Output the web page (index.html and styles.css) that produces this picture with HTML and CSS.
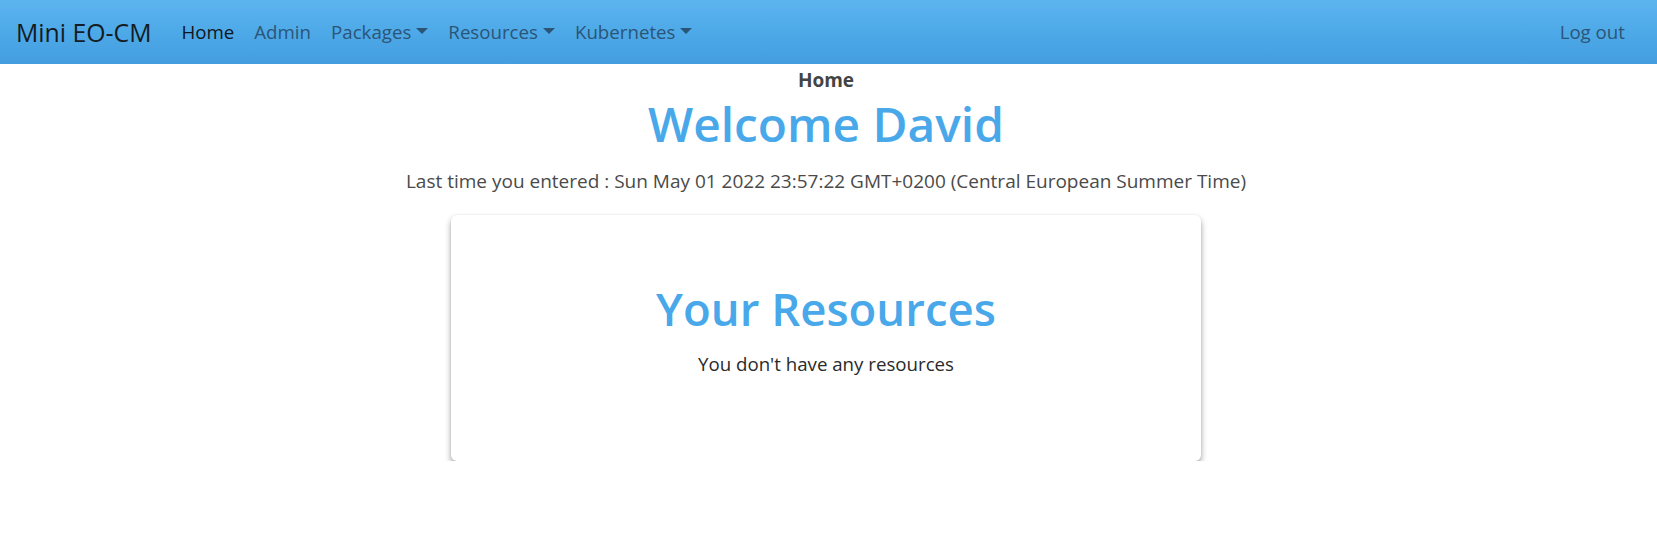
FILE: index.html
```html
<!DOCTYPE html>
<html lang="en">
<head>
<meta charset="utf-8">
<title>Mini EO-CM</title>
<link rel="stylesheet" href="styles.css">
</head>
<body>
<nav class="navbar">
  <a class="brand" href="#">Mini EO-CM</a>
  <ul class="nav">
    <li><a class="nav-link active" href="#">Home</a></li>
    <li><a class="nav-link" href="#">Admin</a></li>
    <li><a class="nav-link dropdown" href="#">Packages</a></li>
    <li><a class="nav-link dropdown" href="#">Resources</a></li>
    <li><a class="nav-link dropdown" href="#">Kubernetes</a></li>
  </ul>
  <ul class="nav nav-right">
    <li><a class="nav-link" href="#">Log out</a></li>
  </ul>
</nav>
<main class="main">
  <div class="page-title">Home</div>
  <h1 class="welcome">Welcome David</h1>
  <p class="last-time">Last time you entered : Sun May 01 2022 23:57:22 GMT+0200 (Central European Summer Time)</p>
  <section class="card">
    <h2 class="card-title">Your Resources</h2>
    <p class="card-text">You don't have any resources</p>
  </section>
</main>
</body>
</html>
```

FILE: styles.css
```css
* { box-sizing: border-box; }

body {
  margin: 0;
  font-family: "Open Sans", "Noto Sans", sans-serif;
  background: #ffffff;
  color: #444444;
}

.navbar {
  display: flex;
  align-items: center;
  height: 64px;
  padding: 0 22px 0 16px;
  background: linear-gradient(to bottom, #5cb4ef 0%, #4ea9e8 50%, #439ddf 100%);
}

.brand {
  font-size: 24.8px;
  color: #141b22;
  text-decoration: none;
  margin-right: 20px;
  line-height: 30px;
}

.nav {
  display: flex;
  list-style: none;
  margin: 0;
  padding: 0;
}

.nav-right { margin-left: auto; }

.nav-link {
  display: block;
  padding: 0 10px;
  font-size: 18.7px;
  line-height: 30px;
  color: #2b5576;
  text-decoration: none;
}

.nav-link.active { color: #10161c; }

.dropdown::after {
  content: "";
  display: inline-block;
  margin-left: 5px;
  vertical-align: 5px;
  border-top: 6px solid currentColor;
  border-left: 6px solid transparent;
  border-right: 6px solid transparent;
}

.main {
  display: flex;
  flex-direction: column;
  align-items: center;
  padding-right: 5px;
  text-align: center;
}

.page-title {
  margin-top: 4px;
  font-size: 19px;
  font-weight: 700;
  line-height: 24px;
  color: #444444;
}

.welcome {
  margin: 2px 0 0;
  font-size: 47.8px;
  font-weight: 600;
  line-height: 60px;
  color: #48a8ea;
}

.last-time {
  margin: 12px 0 0;
  font-size: 19px;
  line-height: 30px;
  color: #4a4a4a;
}

.card {
  width: 750px;
  margin-top: 19px;
  padding: 63px 20px 82px;
  background: #ffffff;
  border-radius: 6px;
  box-shadow: 0 4px 6px rgba(0, 0, 0, 0.36), 0 0 3px rgba(0, 0, 0, 0.06);
}

.card-title {
  margin: 0;
  font-size: 45.5px;
  font-weight: 600;
  line-height: 60px;
  color: #48a8ea;
}

.card-text {
  margin: 11px 0 0;
  font-size: 18.7px;
  line-height: 30px;
  color: #2a2a2a;
}
```
